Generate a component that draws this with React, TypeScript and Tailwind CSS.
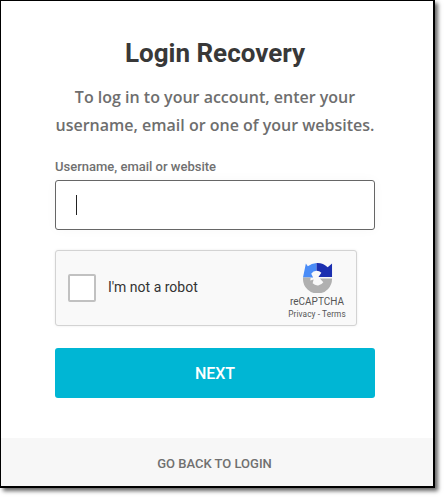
export default function App() {
  return (
    <div className="h-[498px] w-[444px] bg-white">
      <div className="flex h-[488px] w-[435px] flex-col border-t border-r-2 border-b-2 border-l border-black bg-white shadow-[3px_3px_4px_rgba(0,0,0,0.6)] [font-family:Roboto,sans-serif]">
        <div className="flex flex-1 flex-col pt-[36px] pl-[54px]">
          <div className="w-[320px]">
            <h1 className="text-center text-[26px] leading-[32px] font-bold text-[#383838]">Login Recovery</h1>
            <p className="mt-[14px] text-center text-[16px] leading-[28px] font-semibold whitespace-nowrap text-[#6e6e6e] [font-family:'Open_Sans',sans-serif]">
              To log in to your account, enter your
              <br />
              username, email or one of your websites.
            </p>
            <label className="mt-[20px] block text-[13px] leading-[16px] font-medium text-[#707070]">Username, email or website</label>
            <div className="mt-[5px] flex h-[50px] w-[320px] items-center rounded-[3px] border border-[#666] bg-white pl-[20px] shadow-[0_0_12px_rgba(0,0,0,0.03)]">
              <span className="h-[20px] w-px bg-[#222]" />
            </div>
            <div className="mt-[20px] flex h-[76px] w-[302px] items-center rounded-[3px] border border-[#d3d3d3] bg-[#f9f9f9] pl-[12px] shadow-[0_0_3px_rgba(0,0,0,0.08)]">
              <span className="h-[28px] w-[28px] rounded-[2px] border-2 border-[#c1c1c1] bg-white" />
              <span className="mb-[2px] ml-[12px] text-[14px] text-[#333]">I'm not a robot</span>
              <div className="ml-auto flex h-full w-[70px] flex-col items-center pt-[11px] pr-[8px]">
                <svg viewBox="0 0 32 32" className="h-[31px] w-[31px] shrink-0">
                  <path d="M15 1 A15 15 0 0 0 6 4.5 L4 1.5 L1 16 L11.5 16 L9.5 12 A7 7 0 0 1 15 9 Z" fill="#4a8cf7" />
                  <path d="M15 1 L15 9 A7 7 0 0 1 20 11 L17 15.5 L31 15.5 L31 1.5 L26.5 5.5 A15 15 0 0 0 15 1 Z" fill="#1c2fb0" />
                  <path d="M1 16 L9 16 L8.5 19 L12 18 L11 22 A7 7 0 0 0 22 21 L18.5 17 L31 17 A15 15 0 0 1 1 18 Z" fill="#b0b0b0" />
                </svg>
                <span className="mt-[3px] text-[10px] leading-[12px] text-[#555]">reCAPTCHA</span>
                <span className="mt-[1px] text-[8.25px] leading-[11px] tracking-[0.1px] text-[#555]">Privacy - Terms</span>
              </div>
            </div>
            <button className="mt-[22px] h-[50px] w-[320px] rounded-[3px] bg-[#00b6d4] pt-[2px] text-[16px] font-medium text-white">NEXT</button>
          </div>
        </div>
        <div className="flex h-[48px] items-center justify-center bg-[#f7f7f7] pt-[3px] pr-[5px] text-[13px] font-medium text-[#707070]">GO BACK TO LOGIN</div>
      </div>
    </div>
  );
}
